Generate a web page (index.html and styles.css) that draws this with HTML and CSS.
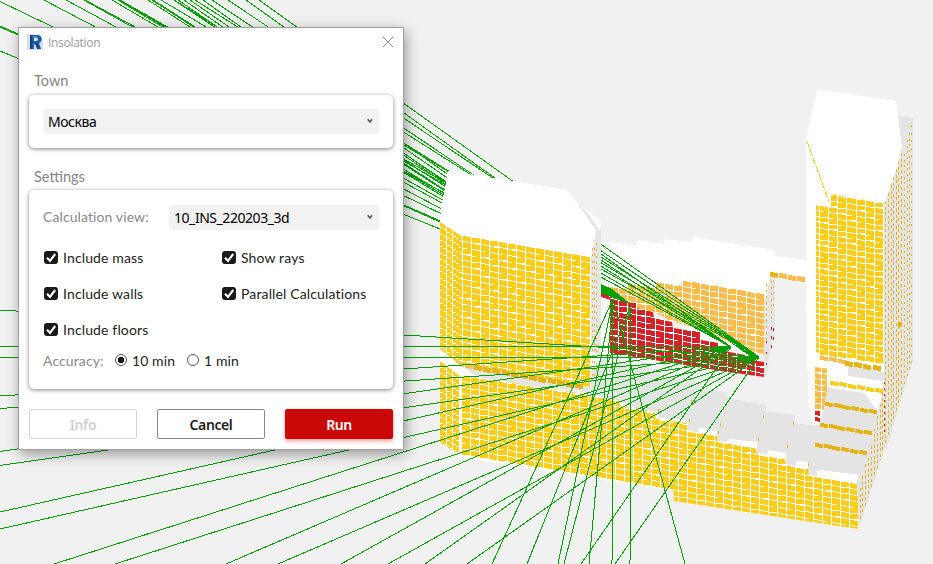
FILE: index.html
```html
<!DOCTYPE html>
<html lang="en">
<head>
<meta charset="utf-8">
<title>Insolation</title>
<link rel="stylesheet" href="styles.css">
</head>
<body>
<svg class="scene" id="scene" viewBox="0 0 933 564" width="933" height="564" aria-hidden="true"></svg>
<section class="dialog">
  <header class="titlebar">
    <svg class="logo" viewBox="0 0 16 16"><path fill="#d3dff0" d="M0 0h16v16H0z"/><path fill="#eef3fa" d="M7 0h9v7H11z"/><path fill="#1d5c9e" d="M3 1h7c6 0 6 7 2 8l2 6h-4l-2-5H7v5H3z"/><path fill="#164477" d="M3 1h2v14H3zM10 9l3 6h-2L8 9z"/><path fill="#4b8ed0" d="M6 2h4l1 2H6z"/><path fill="#d9e6f5" d="M7 4h3q2 1 0 3H7z"/></svg>
    <h1 class="title">Insolation</h1>
    <svg class="close" viewBox="0 0 12 12"><path d="M1 1l10 10M11 1L1 11"/></svg>
  </header>
  <h2 class="heading">Town</h2>
  <div class="card town">
    <div class="select">Москва<svg class="chevron" viewBox="0 0 6 6"><path d="M.7 1.2L3 4 5.3 1.2"/></svg></div>
  </div>
  <h2 class="heading second">Settings</h2>
  <div class="card settings">
    <div class="row view"><span class="muted">Calculation view:</span>
      <div class="select">10_INS_220203_3d<svg class="chevron" viewBox="0 0 6 6"><path d="M.7 1.2L3 4 5.3 1.2"/></svg></div>
    </div>
    <div class="options">
      <label class="option"><svg class="box" viewBox="0 0 14 13"><rect width="14" height="13" rx="3"/><path d="M3 6.8l3 3L11.2 3"/></svg>Include mass</label>
      <label class="option"><svg class="box" viewBox="0 0 14 13"><rect width="14" height="13" rx="3"/><path d="M3 6.8l3 3L11.2 3"/></svg>Show rays</label>
      <label class="option"><svg class="box" viewBox="0 0 14 13"><rect width="14" height="13" rx="3"/><path d="M3 6.8l3 3L11.2 3"/></svg>Include walls</label>
      <label class="option"><svg class="box" viewBox="0 0 14 13"><rect width="14" height="13" rx="3"/><path d="M3 6.8l3 3L11.2 3"/></svg>Parallel Calculations</label>
      <label class="option last"><svg class="box" viewBox="0 0 14 13"><rect width="14" height="13" rx="3"/><path d="M3 6.8l3 3L11.2 3"/></svg>Include floors</label>
    </div>
    <div class="row accuracy"><span class="muted">Accuracy:</span>
      <span class="radio on"></span><span class="ten">10 min</span><span class="radio"></span><span>1 min</span>
    </div>
  </div>
  <footer class="buttons">
    <button class="button info">Info</button>
    <button class="button">Cancel</button>
    <button class="button run">Run</button>
  </footer>
</section>
<script src="scene.js"></script>
</body>
</html>
```
FILE: styles.css
```css
* { box-sizing: border-box; }
body { margin: 0; width: 933px; height: 564px; overflow: hidden; background: #f1f1f1; position: relative; font: 14px Lato, "Noto Sans", sans-serif; color: #1c1c1c; }
.scene { position: absolute; left: 0; top: 0; shape-rendering: crispEdges; }
.ray { stroke: #00a000; stroke-width: 1; fill: none; }
.dialog { position: absolute; left: 18px; top: 27px; width: 386px; height: 423px; padding: 0 10px; background: #fff; border: 1px solid #a0a0a0; box-shadow: 2px 4px 13px rgba(0,0,0,.38); display: flex; flex-direction: column; }
.titlebar { height: 28px; display: flex; align-items: center; margin: 0 -2px; }
.logo { width: 16px; height: 16px; }
.title { margin: 0 0 0 5px; font: 12px "Open Sans", sans-serif; letter-spacing: -.3px; color: #999; flex: 1; }
.close { width: 12px; height: 12px; margin-right: 1px; }
.close path { stroke: #888; fill: none; }
.heading { margin: 15px 0 0 5px; height: 20px; font-size: 14.5px; font-weight: 400; line-height: 20px; color: #858585; }
.heading.second { margin-top: 19px; }
.card { background: #fff; border-radius: 5px; box-shadow: 0 1px 4px rgba(0,0,0,.5); width: 364px; padding: 14px; }
.town { height: 53px; margin-top: 4px; }
.settings { height: 199px; margin-top: 3px; }
.select { height: 25px; border-radius: 3px; background: #f2f2f2; color: #000; flex: 1; padding: 0 6px 1px 5px; display: flex; align-items: center; justify-content: space-between; font: 14px "Noto Sans", sans-serif; letter-spacing: -.45px; }
.chevron { width: 6px; height: 6px; }
.chevron path { stroke: #555; stroke-width: 1.5; fill: none; }
.row { display: flex; align-items: center; }
.muted { color: #888; letter-spacing: .1px; }
.view { height: 25px; margin-top: 1px; }
.view .muted { width: 126px; padding-bottom: 2px; }
.options { display: grid; grid-template-columns: 178px auto; grid-auto-rows: 36px; margin: 10px 0 0 1px; height: 107px; letter-spacing: .14px; }
.option { display: flex; align-items: center; gap: 5px; padding-bottom: 1px; }
.option.last { padding-bottom: 2px; }
.box { width: 14px; height: 13px; }
.box rect { fill: #1a1a1a; }
.box path { fill: none; stroke: #fff; stroke-width: 2.1; }
.accuracy { height: 26px; letter-spacing: .1px; }
.accuracy .muted { width: 72px; }
.radio { width: 12px; height: 12px; border: 1px solid #555; border-radius: 50%; margin-right: 5px; }
.radio.on { background: radial-gradient(circle, #1a1a1a 3px, #fff 3.6px); }
.ten { width: 55px; }
.buttons { display: flex; gap: 20px; margin-top: 20px; }
.button { width: 108px; height: 30px; border: 1px solid #858585; border-radius: 2px; background: #fff; font: 600 14px "Noto Sans", sans-serif; letter-spacing: -.4px; color: #1c1c1c; padding: 0; }
.info { border-color: #d0d0d0; color: #d0d0d0; }
.run { border-color: #ca0808; background: #ca0808; color: #fff; box-shadow: 0 2px 4px rgba(202,8,8,.4); }
```
FILE: scene.js
```js
const NS = 'http://www.w3.org/2000/svg';
const scene = document.getElementById('scene');
const YELLOW = '#ffcc18', DARK = '#e6b412', ORANGE = '#ffbb48', RED = '#d62128', GREY = '#e4e4e4';
let clips = 0;

function add(tag, attrs, parent = scene) {
  const el = document.createElementNS(NS, tag);
  for (const k in attrs) el.setAttribute(k, attrs[k]);
  parent.appendChild(el);
  return el;
}
function poly(points, fill) { return add('polygon', { points, fill }); }
function clip(points) {
  const id = 'clip' + clips++;
  add('polygon', { points }, add('clipPath', { id }));
  return `url(#${id})`;
}
// A wall of window cells; every cell has a one-pixel step in its middle.
function wall(points, x0, y0, cols, w, rowH, slope, fill) {
  poly(points, '#fff');
  let d = '';
  const ys = points.split(' ').map(p => +p.split(',')[1]);
  const bottom = Math.max(...ys) + 8, top = Math.min(...ys) - 8;
  for (let c = 0; c < cols; c++) {
    const x = Math.round(x0 + c * w), right = Math.round(x0 + (c + 1) * w) - 1;
    const mid = Math.round((x + right) / 2);
    for (let r = -60; r < 60; r++) {
      const base = y0 + r * rowH;
      const a = Math.round(base + (x - x0) * slope), b = Math.round(base + (mid - x0) * slope);
      if (b > bottom || a < top) continue;
      const h = Math.round(base + rowH + (x - x0) * slope) - a - 1;
      d += `M${x} ${a}H${mid}V${b}H${right}V${b + h}H${mid}V${a + h}H${x}z`;
    }
  }
  add('path', { d, fill, 'clip-path': clip(points) });
}
function band(x, y, n, w, h, slope, fill) {
  let d = '';
  for (let i = 0; i < n; i++) {
    const a = Math.round(x + i * w), b = Math.round(y + i * w * slope);
    d += `M${a} ${b}h4v1h4v${h}h-4v-1h-4z`;
  }
  add('path', { d, fill });
}
function dots(x, y1, y2, step, h, fill = DARK, area) {
  let d = '';
  for (let y = y1; y < y2; y += step) d += `M${x} ${Math.round(y)}h1v${h}h-1z`;
  const attrs = { d, fill };
  if (area) attrs['clip-path'] = area;
  add('path', attrs);
}
function rays(origin, ends, area) {
  const d = ends.map(e => `M${origin}L${e}`).join('');
  const attrs = { d, class: 'ray' };
  if (area) attrs['clip-path'] = clip(area);
  add('path', attrs);
}

const P1 = '759,357', P2 = '731,347', P3 = '613,299', P4 = '631,305';
const up1 = ['259,0', '228,0', '195,0', '161,0', '118,0'];
const up2 = ['246,0', '212,0', '174,0', '120,0', '85,0'];
rays(P1, up1);
rays(P2, up2);
rays(P3, ['184,0', '178,0', '152,0', '148,0', '118,0', '44,0', '0,26', '0,51']);
rays(P4, ['203,0', '190,0', '174,0', '153,0', '120,0', '112,0', '84,0', '66,0', '0,1.5', '0,27']);

// Rear blocks and courtyard
poly('601,241 611,242 636,246 638,240 664,244 665,239 691,242 693,237 775,250 775,256 806,260 806,280 770,275 764,355 718,349 655,311 628,305 610,302 610,358 601,360', '#fff');
poly('601,240 611,243 610,285 601,282', '#f1f1f1');
poly('640,405 660,409 690,416 720,426 760,436 790,446 815,455 858,472 858,486 808,480 786,467 756,456 717,443 688,433 656,421 640,415', '#fff');
poly('591,357 640,366 659,371 660,377 678,379 698,383 698,389 727,392 727,398 766,405 766,412 795,415 795,423 815,426 817,476 808,475 808,462 797,461 795,466 786,464 786,453 768,450 767,455 757,453 757,442 729,439 727,442 717,441 717,431 700,428 698,432 688,431 688,420 658,418 658,412 640,410 591,396', GREY);
wall('610,287 628,289 628,284 655,288 655,282 682,286 683,280 764,294 764,354 745,350 725,340 700,329 673,322 654,312 637,308 610,298', 610, 287, 18, 9.1, 6.15, .17, ORANGE);
wall('601,291 611,297 631,303 636,303 637,308 653,312 654,318 672,322 673,328 700,332 701,340 718,343 719,350 745,355 746,359 764,362 764,377 728,372 610,353 610,300 601,297', 610, 299, 18, 9.1, 6.15, .17, RED);
poly('601,292 610,297 610,300 601,297', RED);
poly('766,300 770,276 775,273 775,332 769,356 767,376 764,375 764,297', GREY);
dots(766, 284, 340, 6, 2); dots(771, 281, 320, 6, 2); dots(773, 280, 310, 6, 2, ORANGE);
dots(766, 341, 368, 11, 2, '#aa2030'); dots(771, 327, 350, 9, 3, '#aa2030'); dots(773, 328, 346, 9, 3, '#aa2030');
band(770, 272, 4, 9, 5, .15, ORANGE); band(770, 272, 1, 3, 4, 0, DARK);

// Left tower
poly('440,222 442,204 448,171 452,171 567,190 578,204 601,221 601,362 591,370 591,397 520,388 440,365', '#fff');
poly('578,204 587,212 600,231 601,225 601,355 591,352 591,257 596,233 596,230', GREY);
wall('440,222 460,235 460,365 440,349', 440, 222, 4, 6.5, 6.3, .68, YELLOW);
wall('459,235 590,257 590,387 456,363 459,360', 462.4, 236, 14, 9.15, 6.3, .168, YELLOW);
wall('459,235 463,236 463,364 459,364', 459, 235, 1, 4, 6.3, .3, YELLOW);
for (const x of [592, 594, 596]) dots(x, x === 596 ? 243 : 248, 380, 6.3, 2);
poly('463,368 480,367 586,386 586,395 520,386 478,378', GREY);
band(456, 362, 2, 9, 4, .18, ORANGE);
band(474, 365, 12, 9.2, 5, .18, DARK);

// Podium
poly('440,352 460,365 478,377 520,384 600,394 640,410 640,480 673,491 458,457 440,443', '#fff');
poly('586,387 600,391 632,401 620,402 601,397 586,394', GREY);
wall('440,361 460,376 460,455 440,443', 440, 362, 4, 6.5, 6.2, .68, YELLOW);
wall('459,376 513,383 585,394 600,398 619,400 620,406 655,412 656,419 687,423 688,432 717,436 718,442 756,448 757,454 785,459 786,465 808,469 809,476 858,484 858,529 674,501 673,490 459,455', 462.4, 376, 44, 9.02, 6.15, .165, YELLOW);
poly('857,483 860,473 884,380 890,300 913,300 913,360 859,528', GREY);
for (const [x, y] of [[663, 385], [660, 397], [658, 409], [691, 400], [689, 419], [723, 407], [720, 423], [718, 431], [763, 415], [758, 438], [793, 422], [787, 445], [812, 448], [808, 463]]) poly(`${x},${y} ${x + 1},${y} ${x + 1},${y + 3} ${x},${y + 3}`, DARK);

// Right tower
poly('818,89 896,101 902,147 898,165 885,202 884,390 876,415 828,410 820,425 813,425 808,400 806,280 806,136', '#fff');
poly('898,116 913,118 913,360 886,450 876,440 884,380 884,203 902,147', GREY);
poly('818,89 896,101 902,147 898,165 885,202 860,190', '#fff');
let edge = '';
for (let i = 0; i < 22; i++) edge += `M${Math.round(807 + i)} ${Math.round(141 + i * 2.75)}h1v${i % 3 === 2 ? 1 : 3}h-1z`;
add('path', { d: edge, fill: YELLOW });
wall('816,205 831,208 831,194 883,203 883,364 820,355 820,353 816,352', 819.7, 206, 7, 9.2, 5.75, .145, YELLOW);
wall('816,205 819,206 819,353 816,352', 816, 205, 1, 4, 5.75, .2, YELLOW);
const side = clip('885,203 902,150 913,118 913,360 859,526 858,480 884,385');
for (const [i, x] of [885, 888, 891, 893, 896, 898, 901].entries()) {
  dots(x, 201 - i * 8, 515 - i * 20, 5.7, 3, DARK, side);
}
dots(904, 154, 445, 5.7, 2, DARK, side); dots(907, 140, 430, 5.7, 2, DARK, side);
dots(909, 133, 415, 5.7, 2, DARK, side); dots(911, 125, 365, 7.6, 2, DARK, side);
poly('898,322 902,322 902,327 898,327', DARK);
dots(884, 382, 433, 6, 2, '#c52438');
for (const [i, x] of [860, 862, 865, 868, 871, 874, 877, 880, 882].entries()) dots(x, 488 - i * 12, 520 - i * 6, 5.5, 3, DARK, side);

// Terraces
poly('848,366 884,372 884,381 848,376', GREY);
band(820, 356, 3, 9, 4, .15, ORANGE);
band(845, 361, 4, 9.2, 5, .16, DARK);
wall('815,367 830,369 828,388 824,411 815,410', 815, 367, 2, 6.5, 6.1, .14, ORANGE);
poly('828,388 864,393 876,409 877,414 872,445 861,475 820,470 809,475 809,425 820,425', GREY);
poly('865,394 882,397 876,409', '#fff');
band(830, 381, 6, 9, 4, .16, YELLOW);
poly('815,411 820,411 820,416 815,415', RED);
poly('815,417 820,418 820,422 815,421', RED);
band(825, 402, 6, 8.7, 4, .16, DARK);
band(820, 423, 6, 8.7, 4, .16, DARK);
band(815, 443, 6, 8.7, 4, .16, DARK);

// Sun rays in front of the buildings
const right = '601,220 800,220 800,400 601,400';
rays(P1, up1, right);
rays(P2, up2, right);
poly('601,284 612,289 632,305 601,293', '#00a000');
poly('715,346 731,346 702,332 731,347 731,349 716,350', '#00a000');
poly('737,356 750,356 728,341 759,357 757,359 742,358', '#00a000');
rays(P1, ['0,310', '0,357.5', '0,408.5', '0,465.5', '0,529', '115,564', '278,564', '388,564', '467,564', '615,564']);
rays(P2, ['0,346.5', '0,396', '0,451.5', '0,512', '54,564', '226,564', '341,564', '425,564', '581,564']);
rays(P3, ['492,564', '558,564', '589,564', '612,564', '685,564']);
rays(P4, ['527,564', '564,564', '630,564']);
```
